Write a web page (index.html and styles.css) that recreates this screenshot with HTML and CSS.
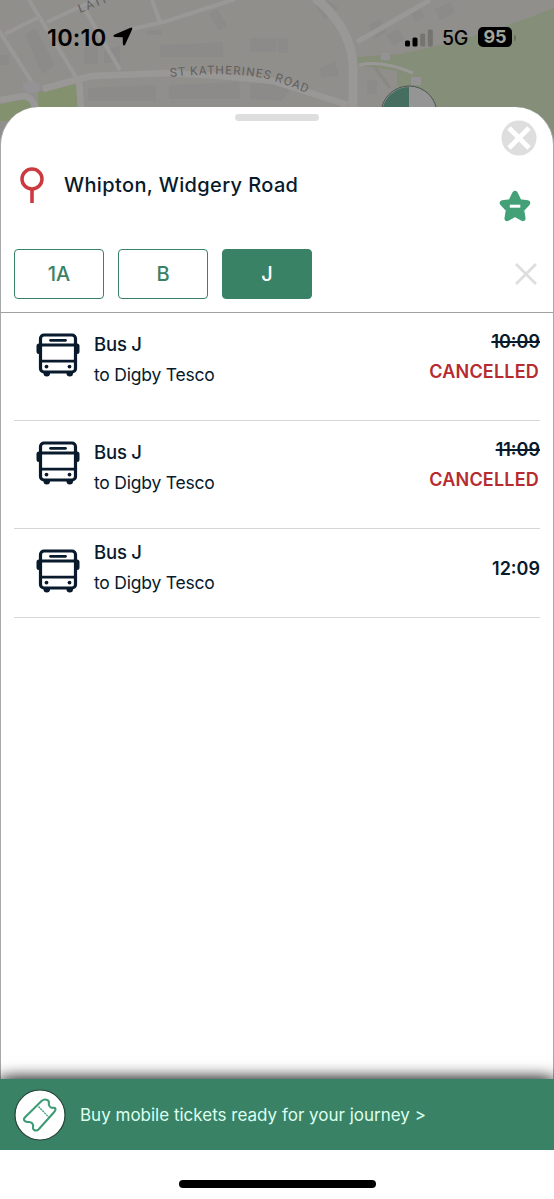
FILE: index.html
```html
<!DOCTYPE html>
<html lang="en">
<head>
<meta charset="utf-8">
<title>Departures</title>
<link rel="stylesheet" href="styles.css">
</head>
<body>
<svg class="defs" width="0" height="0">
  <symbol id="bus" viewBox="0 0 44 44">
    <rect x="4.5" y="2" width="35" height="37" rx="3.5" fill="none" stroke="currentColor" stroke-width="3.2"/>
    <path d="M4.5 12h35M4.5 28.2h35" stroke="currentColor" stroke-width="2.800"/>
    <path d="M14.5 7.3h15" stroke="currentColor" stroke-width="2.8" stroke-linecap="round"/>
    <path d="M4.5 10.500H3a2.500 2.500 0 0 0-2.500 2.500v5.500A2.500 2.500 0 0 0 3 21h1.500zM39.500 10.500H41a2.500 2.500 0 0 1 2.500 2.500v5.500A2.500 2.500 0 0 1 41 21h-1.500zM7.500 39h6.500v1.500a3.200 3 0 0 1-6.500 0zM30.500 39H37v1.500a3.200 3 0 0 1-6.500 0z" fill="currentColor"/>
    <circle cx="10.500" cy="33.600" r="1.900" fill="currentColor"/><circle cx="33.500" cy="33.600" r="1.900" fill="currentColor"/>
  </symbol>
</svg>
<div class="screen">
  <svg class="map" viewBox="0 0 554 150" width="554" height="150">
    <rect width="554" height="150" fill="#918f8b"/>
    <path d="M38 92L77 84V110H38zM0 104l28-5 6 10v12H0z" fill="#84916f"/>
    <path d="M554 8L520 21 450 43 400 54 357 57V65L397 71V85L430 110V150H554z" fill="#858e79"/>
    <g fill="#8c8b8a">
      <path d="M25 35l10-7 20 37-13 9zM84 48l14-4v20H84zM104 50l16-4v17h-16zM160 45l63-3v15h-63zM250 38h27v14h-27zM88 88l68-3v16H88zM169 85l70-3 1 17h-71zM250 84l25-3 15 9-8 11-32-2zM209 14l8-5 10 16-8 6zM147 30h15v5h-15zM0 55h9v10H0zM315 5l13-5 11 8-14 12zM278 38h10v15h-10zM320 68l15-6 4 14-18 2zM368 25l12-6 7 13-12 7zM386 35l12-6 7 10-11 7zM411 13l9-5 4 9-9 5zM435 9l16-7 4 11-15 7zM367 80h10v14h-10z"/>
    </g>
    <g fill="none" stroke="#9a9897" stroke-width="4">
      <path d="M-4 26L33 84M5 34l34-17M29 0L79 82M47 22L95 0M84 8l36 62M152 0l8 22M128 30L167 21 235-1" />
      <path d="M357 42L430 0" stroke-width="5"/>
      <path d="M43 89L79 79 92 76 167 73Q220 75 273 81L348 105M79 79l2 32M0 100L23 96q9 0 13 13" stroke-width="6.500"/>
      <path d="M315-2Q350 26 353 64V112" stroke-width="9"/>
      <path d="M359 65Q382 60 413 73" stroke-width="3"/>
      <path d="M374 66l16 22" stroke="#898885" stroke-width="3"/>
    </g>
    <g fill="#949294"><path d="M23 83l9-2 8 3-1 8-9 2-7-4zM381 53h9v7h-9zM411 77h10v8h-10z"/></g>
    <path id="road-a" d="M80 13L128-6" fill="none"/>
    <path id="road-b" d="M170 77Q225 71 263 78Q287 84 318 98" fill="none"/>
    <text class="road wide"><textPath href="#road-a">LATI</textPath></text>
    <text class="road" textLength="141"><textPath href="#road-b" textLength="141">ST KATHERINES ROAD</textPath></text>
    <circle cx="409" cy="114" r="28" fill="#959595" stroke="#4b5550"/>
    <path d="M409 87a27 27 0 0 0-27 27h27z" fill="#456e60"/>
  </svg>

  <header class="status">
    <div class="clock"><span>10:10</span>
      <svg width="20" height="20" viewBox="0 0 20 20"><path d="M17.500.8Q20 0 19 2.800L12.200 17.500q-1.200 2-2.300 0l-.2-7.200L2 10Q-1 9.500 1.300 7.700z"/></svg>
    </div>
    <div class="signal">
      <svg width="28" height="18" viewBox="0 0 28 18"><rect y="11.500" width="5" height="6" rx="1.500"/><rect x="7.500" y="8.500" width="5" height="9" rx="1.500"/><g fill="#757470"><rect x="15.200" y="4.500" width="5" height="13" rx="1.500"/><rect x="22.800" y=".5" width="5" height="17" rx="1.500"/></g></svg>
      <span class="network">5G</span>
      <span class="battery">95</span><i class="cap"></i>
    </div>
  </header>

  <main class="sheet">
    <section class="top">
      <div class="grip"></div>
      <div class="stop">
        <svg width="24" height="37" viewBox="0 0 24 37" fill="none" stroke="#cc3a40"><circle cx="12" cy="12" r="10" stroke-width="3.500"/><path d="M12 22v14" stroke-width="3.600"/></svg>
        <h1>Whipton, Widgery Road</h1>
      </div>
      <div class="filters"><button>1A</button><button>B</button><button class="active">J</button></div>
      <div class="actions">
        <svg class="close" width="36" height="36" viewBox="0 0 36 36"><circle cx="18" cy="18" r="17.500" fill="#dedede"/><path d="M8 8l20 20m0-20l-20 20" stroke="#fff" stroke-width="4.800"/></svg>
        <svg class="star" width="32" height="32" viewBox="0 0 32 32"><path d="M16 3.500l3.700 7.500q.4.800 1.300.9l7.500 1.100-5.600 6q-.5.600-.4 1.400l1.300 8L17 24.700q-1-.5-2 0l-6.800 3.700 1.300-8q.1-.8-.4-1.400L3.500 13l7.500-1.100q.9-.1 1.300-.9z" fill="#43a077" stroke="#43a077" stroke-width="5.500" stroke-linejoin="round"/><path d="M10.800 16.200h10.500" stroke="#fff" stroke-width="3"/></svg>
        <svg class="clear" width="24" height="24" viewBox="0 0 24 24"><path d="M2 2l20 20M22 2L2 22" stroke="#dedede" stroke-width="2.800"/></svg>
      </div>
    </section>
    <ul class="departures">
      <li><svg class="bus"><use href="#bus"/></svg><div class="trip"><strong>Bus J</strong><span>to Digby Tesco</span></div><div class="due"><s>10:09</s><em>CANCELLED</em></div></li>
      <li><svg class="bus"><use href="#bus"/></svg><div class="trip"><strong>Bus J</strong><span>to Digby Tesco</span></div><div class="due"><s>11:09</s><em>CANCELLED</em></div></li>
      <li class="short"><svg class="bus"><use href="#bus"/></svg><div class="trip"><strong>Bus J</strong><span>to Digby Tesco</span></div><div class="due"><b>12:09</b></div></li>
    </ul>
  </main>

  <footer class="tickets">
    <svg width="52" height="52" viewBox="0 0 52 52"><circle cx="26" cy="26" r="25" fill="#fff" stroke="#26443a" stroke-width="1.200"/>
      <g fill="none" stroke="#3f9b76" stroke-width="2.100" stroke-linejoin="round"><path d="M10.800 28.500L27.500 12q3-2.500 6-.8 1.800 1 1.300 2.900a4 4 0 0 0 4.500 4.700q2-.3 2.200 1.300 0 1.700-1.500 3.200L24.500 40.500q-2 1.800-4.500.5-1.500-1-1-3a4 4 0 0 0-4.500-5q-2 .3-3.500-.8-2-1.700-.2-3.700z"/><path d="M24.500 17.500l10.500 11" stroke-width="1.300" stroke-dasharray="2 .8"/></g></svg>
    <span>Buy mobile tickets ready for your journey &gt;</span>
  </footer>
  <div class="home"></div>
</div>
</body>
</html>
```
FILE: styles.css
```css
* { box-sizing: border-box; }
body { margin: 0; background: #fff; font-family: Inter, "Liberation Sans", sans-serif; color: #081a2b; }
.defs { position: absolute; }
.screen { position: relative; width: 554px; height: 1199px; display: flex; flex-direction: column; overflow: hidden; }
.map { position: absolute; top: 0; left: 0; }
.road { font: 12px Roboto, sans-serif; fill: #62605f; letter-spacing: 1px; }
.wide { letter-spacing: 1.5px; }
.status { position: relative; height: 107px; flex: none; display: flex; justify-content: space-between; align-items: flex-start; padding: 24px 38px 0 47px; color: #000; }
.clock, .signal { display: flex; align-items: center; height: 27px; }
.clock { gap: 7px; font-size: 23.500px; font-weight: 600; }
.clock svg { margin-top: -2px; }
.clock span { width: 59px; margin-top: -1px; letter-spacing: .2px; }
.network { margin-left: 9px; width: 27px; font-size: 19.500px; font-weight: 500; letter-spacing: -.4px; }
.battery { margin-left: 9px; width: 34px; height: 20px; margin-top: -2px; line-height: 20px; border-radius: 5px; background: #000; color: #a2a69b; font-size: 18px; font-weight: 700; text-align: center; }
.cap { width: 2px; height: 6px; margin-left: 2px; border-radius: 0 2px 2px 0; background: #6b7065; }
.sheet { position: relative; flex: none; height: 972px; background: #fff; border: 1px solid #a6a8ab; border-width: 0 1px; border-radius: 38px 38px 0 0; }
.top { position: relative; height: 206px; border-bottom: 1px solid #a0a1a2; display: grid; grid-template-columns: 1fr 40px; grid-template-rows: 142px 50px; padding: 0 15px 0 13px; }
.grip { position: absolute; top: 7px; left: 234px; width: 84px; height: 7px; border-radius: 4px; background: #dedede; }
.stop { display: flex; align-items: flex-start; padding: 60px 0 0 6px; gap: 20px; }
h1 { margin: 5px 0 0; font-size: 20px; line-height: 26px; font-weight: 550; letter-spacing: .37px; white-space: nowrap; }
.filters { grid-row: 2; display: flex; gap: 14px; }
.filters button { width: 90px; height: 49.500px; padding: 0; border: 1.5px solid #398266; border-radius: 4px; background: #fff; color: #398266; font: 550 20px Inter, sans-serif; }
.filters .active { background: #398266; color: #fff; }
.actions { grid-column: 2; grid-row: 1 / 3; display: flex; flex-direction: column; align-items: flex-end; padding-top: 13px; }
.close { margin-right: 1px; }
.star { margin: 34px 7px 0 0; }
.clear { margin-top: 40px; }
.departures { list-style: none; margin: 0; padding: 0 13px; }
.departures li { height: 108px; display: flex; align-items: flex-start; padding: 20px 0 0 22px; border-bottom: 1px solid #d5d6d7; }
.bus { width: 44px; height: 44px; color: #081a2b; }
.trip { display: flex; flex-direction: column; margin-left: 14px; flex: 1; }
.trip strong { font-size: 18.500px; line-height: 22px; font-weight: 550; letter-spacing: -.2px; }
.trip span { margin-top: 9px; font-size: 17.500px; line-height: 22px; font-weight: 400; letter-spacing: -.22px; }
.due { display: flex; flex-direction: column; align-items: flex-end; font-size: 18px; line-height: 22px; font-weight: 600; margin: -2px 1px 0 0; }
.due s { margin-right: -1px; text-decoration-thickness: 2px; }
.due em { margin-top: 8px; font-style: normal; color: #b52b30; letter-spacing: .2px; }
.due b { margin-right: -1px; font-weight: 600; }
.departures .short { height: 89px; }
.short .trip { margin-top: -8px; }
.short .due { margin-top: 9px; }
.tickets { position: relative; flex: none; height: 71px; display: flex; align-items: center; padding-left: 14px; gap: 14px; background: #398266; color: #dcfff0; font-size: 17px; white-space: nowrap; box-shadow: 0 -1px 15px rgba(0,0,0,.8), -12px 0 14px rgba(0,0,0,.2), 12px 0 14px rgba(0,0,0,.2); clip-path: inset(-24px 0 0); }
.home { width: 197px; height: 8px; margin: 30px 0 0 179px; border-radius: 4px; background: #000; }
```
